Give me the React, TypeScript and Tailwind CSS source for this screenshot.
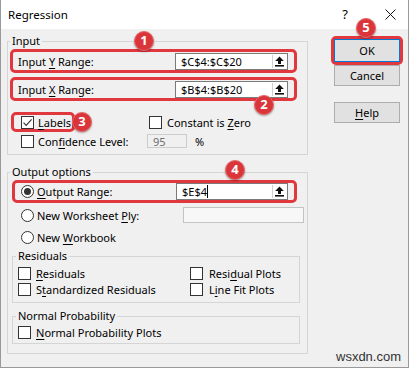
import React from "react";

const FONT = { fontFamily: '"Noto Sans", "Open Sans", sans-serif' };

const U = ({ children }: { children: React.ReactNode }) => (
  <span className="underline underline-offset-[2px] decoration-[1px]">{children}</span>
);

const Check = ({ checked = false }: { checked?: boolean }) => (
  <span className="w-[13px] h-[13px] border border-[#333333] bg-white flex items-center justify-center shrink-0">
    {checked && (
      <svg width="11" height="11" viewBox="0 0 11 11">
        <path d="M1.5 5.6 L4.2 8.4 L9.6 2.4" stroke="#333" strokeWidth="1.1" fill="none" />
      </svg>
    )}
  </span>
);

const Radio = ({ selected = false }: { selected?: boolean }) => (
  <span className="w-[13px] h-[13px] rounded-full border border-[#333333] bg-white flex items-center justify-center shrink-0">
    {selected && <span className="w-[7px] h-[7px] rounded-full bg-[#333333]" />}
  </span>
);

const UpArrow = () => (
  <svg width="9" height="11" viewBox="0 0 9 11">
    <path d="M4.5 0.5 L8.8 5 H6 V8 H3 V5 H0.2 Z" fill="#111" />
    <rect x="0" y="9" width="9" height="1.6" fill="#111" />
  </svg>
);

const RefBox = ({ value, caret = false, w = "w-[113px]" }: { value: string; caret?: boolean; w?: string }) => (
  <div className={`${w} h-[17px] border border-[#7a7a7a] bg-white flex shrink-0`}>
    <div className="flex-1 pl-[5px] text-[11px] leading-[15px] text-black flex items-center">
      {value}
      {caret && <span className="w-[1px] h-[13px] bg-black" />}
    </div>
    <div className="w-[14px] my-[1px] mr-[1px] border-l border-[#d0d0d0] bg-white flex items-center justify-center">
      <UpArrow />
    </div>
  </div>
);

const Badge = ({ n, x, y }: { n: string; x: number; y: number }) => (
  <div
    className="absolute w-[20px] h-[20px] rounded-full bg-[#d9353a] text-white text-[13px] font-bold flex items-center justify-center shadow-[0_1px_2px_rgba(0,0,0,0.35)] border border-[#e86a6a]"
    style={{ left: x - 10, top: y - 10, ...FONT }}
  >
    {n}
  </div>
);

const Legend = ({ children, ml = "ml-[2px]" }: { children: React.ReactNode; ml?: string }) => (
  <legend className={`${ml} px-[2px] text-[11px] leading-[16px] text-black`}>{children}</legend>
);

export default function App() {
  return (
    <div
      className="relative w-[409px] h-[368px] bg-[#f0f0f0] border-x border-b border-[#999999] text-black text-[11px] overflow-hidden"
      style={FONT}
    >
      {/* Title bar */}
      <div className="h-[29px] bg-white flex items-center pl-[7px] pr-[12px]">
        <span className="text-[11.5px] leading-none">Regression</span>
        <span className="ml-auto text-[13px] leading-none mr-[37px]">?</span>
        <svg width="11" height="11" viewBox="0 0 11 11">
          <path d="M0.5 0.5 L10.5 10.5 M10.5 0.5 L0.5 10.5" stroke="#111" strokeWidth="1" />
        </svg>
      </div>

      <div className="flex pl-[6px]">
        {/* Left column */}
        <div className="w-[301px] mt-[4px]">
          <fieldset className="border border-[#d5d5d5] pb-[6px]">
            <Legend ml="ml-[2px]">Input</Legend>
            <div className="ml-[2px] w-[287px] h-[24px] border-[3px] border-[#e0383e] rounded-[5px] flex items-center pl-[5px] pr-[6px]">
              <span className="flex-1 leading-none">
                Input <U>Y</U> Range:
              </span>
              <RefBox value="$C$4:$C$20" />
            </div>
            <div className="mt-[4px] ml-[2px] w-[287px] h-[24px] border-[3px] border-[#e0383e] rounded-[5px] flex items-center pl-[5px] pr-[6px]">
              <span className="flex-1 leading-none">
                Input <U>X</U> Range:
              </span>
              <RefBox value="$B$4:$B$20" />
            </div>
            <div className="mt-[11px] flex items-center h-[20px]">
              <div className="w-[141px] flex items-center">
                <div className="ml-[3px] h-[20px] border-[3px] border-[#e0383e] rounded-[5px] flex items-center gap-[4px] pl-[7px] pr-[1px]">
                  <Check checked />
                  <span className="leading-none">
                    <U>L</U>abels
                  </span>
                </div>
              </div>
              <div className="flex items-center gap-[5px]">
                <Check />
                <span className="leading-none">
                  Constant is <U>Z</U>ero
                </span>
              </div>
            </div>
            <div className="mt-[2px] h-[14px] flex items-center">
              <div className="w-[139px] flex items-center gap-[4px] pl-[13px]">
                <Check />
                <span className="leading-none">
                  Con<U>f</U>idence Level:
                </span>
              </div>
              <div className="w-[40px] h-[14px] border border-[#cccccc] bg-[#f0f0f0] text-[#6d6d6d] pl-[5px] flex items-center leading-none">
                95
              </div>
              <span className="ml-[8px] leading-none">%</span>
            </div>
          </fieldset>

          <fieldset className="mt-[9px] border border-[#d5d5d5] pb-[9px]">
            <Legend ml="ml-[2px]">Output options</Legend>
            <div className="ml-[4px] w-[285px] h-[23px] border-[3px] border-[#e0383e] rounded-[5px] flex items-center pl-[6px] pr-[6px]">
              <div className="flex-1 flex items-center gap-[3px]">
                <Radio selected />
                <span className="leading-none">
                  <U>O</U>utput Range:
                </span>
              </div>
              <RefBox value="$E$4" caret w="w-[112px]" />
            </div>
            <div className="mt-[3px] h-[18px] flex items-center pl-[13px]">
              <div className="flex-1 flex items-center gap-[3px]">
                <Radio />
                <span className="leading-none">
                  New Worksheet <U>P</U>ly:
                </span>
              </div>
              <div className="w-[121px] h-[16px] mr-[3px] border border-[#c3c3c3] bg-[#f7f7f7]" />
            </div>
            <div className="mt-[4px] h-[18px] flex items-center pl-[13px] gap-[3px]">
              <Radio />
              <span className="leading-none">
                New <U>W</U>orkbook
              </span>
            </div>
            <fieldset className="mt-[2px] ml-[4px] w-[288px] border border-[#d5d5d5] pb-[5px]">
              <Legend ml="ml-[3px]">Residuals</Legend>
              <div className="mt-[1px] grid grid-cols-[172px_1fr] pl-[5px]">
                <div className="h-[16px] flex items-center gap-[5px]">
                  <Check />
                  <span className="leading-none">
                    <U>R</U>esiduals
                  </span>
                </div>
                <div className="h-[16px] flex items-center gap-[6px]">
                  <Check />
                  <span className="leading-none">
                    Resi<U>d</U>ual Plots
                  </span>
                </div>
                <div className="h-[16px] flex items-center gap-[5px]">
                  <Check />
                  <span className="leading-none">
                    S<U>t</U>andardized Residuals
                  </span>
                </div>
                <div className="h-[16px] flex items-center gap-[6px]">
                  <Check />
                  <span className="leading-none">
                    L<U>i</U>ne Fit Plots
                  </span>
                </div>
              </div>
            </fieldset>
            <fieldset className="mt-[5px] ml-[4px] w-[288px] border border-[#d5d5d5] pb-[3px]">
              <Legend ml="ml-[3px]">Normal Probability</Legend>
              <div className="h-[16px] flex items-center gap-[5px] pl-[5px]">
                <Check />
                <span className="leading-none">
                  <U>N</U>ormal Probability Plots
                </span>
              </div>
            </fieldset>
          </fieldset>
        </div>

        {/* Right column: buttons */}
        <div className="ml-[23px] mt-[7px] flex flex-col">
          <div className="w-[72px] h-[29px] border-[3px] border-[#e0383e] rounded-[5px]">
            <div className="w-[66px] h-[23px] border border-[#0078d7] bg-[#e1e1e1] flex items-center justify-center leading-none">
              OK
            </div>
          </div>
          <div className="ml-[3px] w-[66px] h-[21px] border border-[#adadad] bg-[#e1e1e1] flex items-center justify-center leading-none">
            Cancel
          </div>
          <div className="mt-[16px] ml-[3px] w-[66px] h-[21px] border border-[#adadad] bg-[#e1e1e1] flex items-center justify-center leading-none">
            <U>H</U>elp
          </div>
        </div>
      </div>

      {/* Annotation badges */}
      <Badge n="1" x={143} y={41} />
      <Badge n="2" x={263} y={105} />
      <Badge n="3" x={81} y={122} />
      <Badge n="4" x={234} y={170} />
      <Badge n="5" x={365} y={28} />

      <span
        className="absolute left-[335px] top-[349px] text-[13px] leading-[16px] text-[#333333]"
        style={{ fontFamily: '"Liberation Sans", Arial, sans-serif' }}
      >
        wsxdn.com
      </span>
    </div>
  );
}
